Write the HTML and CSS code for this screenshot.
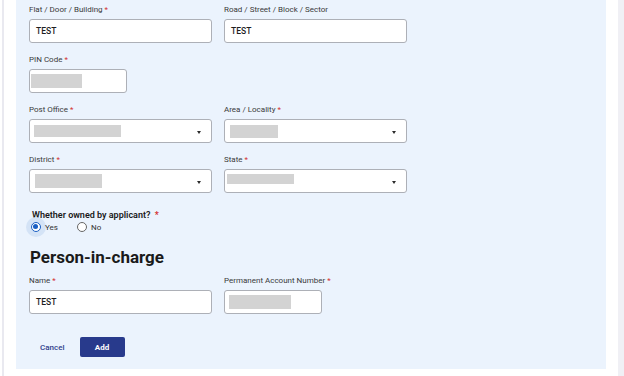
FILE: index.html
```html
<!DOCTYPE html>
<html lang="en">
<head>
<meta charset="utf-8">
<title>Address form</title>
<link rel="stylesheet" href="styles.css">
</head>
<body>
<div class="page">
  <div class="rail-left"></div>
  <main class="panel">
    <div class="grid">
      <div class="field">
        <label class="lbl">Flat / Door / Building <span class="req">*</span></label>
        <div class="input"><span class="val">TEST</span></div>
      </div>
      <div class="field">
        <label class="lbl">Road / Street / Block / Sector</label>
        <div class="input"><span class="val">TEST</span></div>
      </div>
      <div class="field">
        <label class="lbl">PIN Code <span class="req">*</span></label>
        <div class="input short"><span class="blk blk-pin"></span></div>
      </div>
      <div class="field"></div>
      <div class="field">
        <label class="lbl">Post Office <span class="req">*</span></label>
        <div class="input select"><span class="blk blk-po"></span><span class="caret"></span></div>
      </div>
      <div class="field">
        <label class="lbl">Area / Locality <span class="req">*</span></label>
        <div class="input select"><span class="blk blk-area"></span><span class="caret"></span></div>
      </div>
      <div class="field">
        <label class="lbl">District <span class="req">*</span></label>
        <div class="input select"><span class="blk blk-dist"></span><span class="caret"></span></div>
      </div>
      <div class="field">
        <label class="lbl">State <span class="req">*</span></label>
        <div class="input select"><span class="blk blk-state"></span><span class="caret"></span></div>
      </div>
    </div>

    <div class="question">Whether owned by applicant? <span class="req">*</span></div>
    <div class="radios">
      <span class="radio-opt"><span class="halo"><span class="radio checked"></span></span>Yes</span>
      <span class="radio-opt"><span class="halo off"><span class="radio"></span></span>No</span>
    </div>

    <h2 class="heading">Person-in-charge</h2>

    <div class="grid">
      <div class="field">
        <label class="lbl">Name <span class="req">*</span></label>
        <div class="input"><span class="val">TEST</span></div>
      </div>
      <div class="field">
        <label class="lbl">Permanent Account Number <span class="req">*</span></label>
        <div class="input short"><span class="blk blk-pan"></span></div>
      </div>
    </div>

    <div class="actions">
      <button class="btn-cancel">Cancel</button>
      <button class="btn-add">Add</button>
    </div>
  </main>
  <div class="rail-right"></div>
</div>
</body>
</html>
```

FILE: styles.css
```css
* { box-sizing: border-box; }
html, body { margin: 0; padding: 0; background: #ffffff; }
body { font-family: Roboto, "Liberation Sans", sans-serif; color: #222; }

.page { display: flex; height: 376px; width: 624px; overflow: hidden; }
.rail-left { width: 2px; margin-left: 2px; background: #e9e9f0; }
.panel {
  margin-left: 12px;
  width: 590px;
  height: 369px;
  background: #ebf3fd;
  padding: 4px 0 0 13px;
}
.rail-right { margin-left: 12px; width: 6px; background: #f0f0f5; }

.grid {
  display: grid;
  grid-template-columns: 183px 183px;
  column-gap: 12px;
  row-gap: 11px;
}
.field { display: flex; flex-direction: column; }
.lbl {
  font-size: 8px;
  line-height: 11px;
  color: #3a3a3a;
  margin-bottom: 4px;
  white-space: nowrap;
}
.req { color: #d32f2f; }

.input {
  position: relative;
  height: 24px;
  background: #fff;
  border: 1px solid #adb0b7;
  border-radius: 3px;
  display: flex;
  align-items: center;
}
.input.short { width: 98px; }
.val {
  font-size: 8.5px;
  font-weight: 500;
  color: #1e1e1e;
  padding-left: 6px;
}
.blk { display: block; background: #d3d3d3; }
.blk-pin { margin-left: 1px; width: 51px; height: 14px; }
.blk-po { margin-left: 4px; width: 87px; height: 12px; }
.blk-area { margin-left: 5px; width: 48px; height: 13px; }
.blk-dist { margin-left: 5px; width: 67px; height: 14px; }
.blk-state { margin-left: 2px; width: 67px; height: 10px; margin-top: -4px; }
.blk-pan { margin-left: 4px; width: 62px; height: 14px; }

.caret {
  position: absolute;
  right: 10px;
  top: 11px;
  width: 0;
  height: 0;
  border-left: 2.5px solid transparent;
  border-right: 2.5px solid transparent;
  border-top: 3px solid #2b2b2b;
}

.question {
  margin-top: 16px;
  margin-left: 3px;
  font-size: 9px;
  line-height: 12px;
  font-weight: 600;
  color: #1a1a1a;
}
.question .req { margin-left: 2px; }

.radios {
  display: flex;
  align-items: center;
  height: 12px;
  font-size: 8px;
  color: #333;
}
.radio-opt { display: flex; align-items: center; }
.radio-opt + .radio-opt { margin-left: 17px; }
.halo {
  width: 20px;
  height: 20px;
  border-radius: 50%;
  background: #d4e3f6;
  display: flex;
  align-items: center;
  justify-content: center;
  margin-left: -3px;
  margin-right: -1px;
}
.halo.off { background: transparent; }
.radio {
  width: 10px;
  height: 10px;
  border-radius: 50%;
  border: 1px solid #666;
  background: #fff;
  position: relative;
}
.radio.checked { border: 1.2px solid #1a5fc4; }
.radio.checked::after {
  content: "";
  position: absolute;
  left: 1.4px;
  top: 1.4px;
  width: 5px;
  height: 5px;
  border-radius: 50%;
  background: #1a5fc4;
}

.heading {
  margin: 14px 0 7.5px 1px;
  font-size: 17px;
  line-height: 20px;
  font-weight: 700;
  color: #1a1a1a;
}

.actions {
  margin-top: 23.5px;
  display: flex;
  align-items: center;
  gap: 4px;
}
.btn-cancel {
  font-family: inherit;
  font-size: 8px;
  font-weight: 500;
  color: #2f3f8c;
  background: transparent;
  border: 0;
  padding: 0 11px;
  height: 20px;
}
.btn-add {
  font-family: inherit;
  font-size: 8px;
  font-weight: 700;
  color: #fff;
  background: #283a8c;
  border: 0;
  border-radius: 2px;
  width: 45px;
  height: 20px;
  padding: 0;
}
```
